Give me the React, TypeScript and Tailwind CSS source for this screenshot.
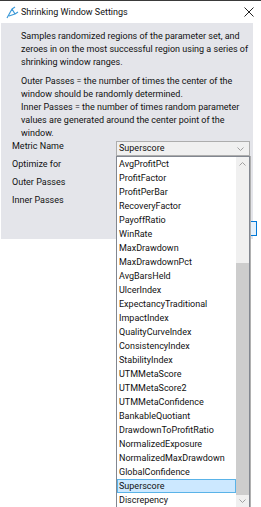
import React from "react";

const items = [
  "AvgProfitPct",
  "ProfitFactor",
  "ProfitPerBar",
  "RecoveryFactor",
  "PayoffRatio",
  "WinRate",
  "MaxDrawdown",
  "MaxDrawdownPct",
  "AvgBarsHeld",
  "UlcerIndex",
  "ExpectancyTraditional",
  "ImpactIndex",
  "QualityCurveIndex",
  "ConsistencyIndex",
  "StabilityIndex",
  "UTMMetaScore",
  "UTMMetaScore2",
  "UTMMetaConfidence",
  "BankableQuotiant",
  "DrawdownToProfitRatio",
  "NormalizedExposure",
  "NormalizedMaxDrawdown",
  "GlobalConfidence",
  "Superscore",
  "Discrepency",
];

const font = { fontFamily: 'Roboto, "Noto Sans", sans-serif' };

function Chevron({ up }: { up?: boolean }) {
  return (
    <svg width="7" height="4" viewBox="0 0 7 4" className="block">
      <path
        d={up ? "M0.5 3.5 L3.5 0.5 L6.5 3.5" : "M0.5 0.5 L3.5 3.5 L6.5 0.5"}
        fill="none"
        stroke="#a0a0a0"
        strokeWidth="1"
      />
    </svg>
  );
}

export default function App() {
  return (
    <div
      className="relative w-[261px] h-[507px] overflow-hidden bg-white text-[9px] text-[#111]"
      style={font}
    >
      <div className="h-px bg-[#3a3a3a]" />
      {/* Title bar */}
      <div className="flex h-[22px] items-center pl-[6px] pr-[7px]">
        <svg width="13" height="13" viewBox="0 0 13 13" className="mr-[2px]">
          <path
            d="M1 12 L6 3 L9 8 L3 10 M6 3 L9 1 M9 8 L12 6"
            fill="none"
            stroke="#3d9ad8"
            strokeWidth="1.2"
            strokeLinejoin="round"
          />
        </svg>
        <span className="text-[9px] leading-none">Shrinking Window Settings</span>
        <span className="ml-auto">
          <svg width="10" height="10" viewBox="0 0 10 10">
            <path d="M0.5 0.5 L9.5 9.5 M9.5 0.5 L0.5 9.5" stroke="#222" strokeWidth="1" />
          </svg>
        </span>
      </div>
      {/* Panel */}
      <div className="ml-px w-[252px] h-[216px] bg-[#e4e5ea] pt-[7px]">
        <div className="pl-[20px] pr-[4px] leading-[13px]">
          <p>
            Samples randomized regions of the parameter set, and zeroes in on the
            most successful region using a series of shrinking window ranges.
          </p>
          <p className="mt-[6px]">
            Outer Passes = the number of times the center of the window should be
            randomly determined.
          </p>
          <p>
            Inner Passes = the number of times random parameter values are
            generated around the center point of the window.
          </p>
        </div>
        <div className="pl-[11px]">
          <div className="flex h-[18px] items-start">
            <span className="w-[104px] leading-[13px]">Metric Name</span>
            <div className="mt-[1px] flex h-[15px] w-[134px] items-center border border-[#adadad] bg-[#f0f0f0] pl-[2px] pr-[5px]">
              <span className="leading-none">Superscore</span>
              <span className="ml-auto">
                <Chevron />
              </span>
            </div>
          </div>
          <div className="flex h-[18px] items-start">
            <span className="leading-[13px]">Optimize for</span>
          </div>
          <div className="flex h-[18px] items-start">
            <span className="leading-[13px]">Outer Passes</span>
          </div>
          <div className="flex h-[18px] items-start">
            <span className="leading-[13px]">Inner Passes</span>
          </div>
        </div>
      </div>
      {/* Partially hidden button */}
      <div className="absolute left-[236px] top-[221px] h-[15px] w-[21px] border border-[#0078d7] bg-[#e5f1fb]" />
      {/* Dropdown list */}
      <div className="absolute left-[116px] top-[156px] flex h-[352px] w-[134px] border border-[#828790] bg-white shadow-[1px_0_0_#b0b0b0]">
        <div className="flex-1">
          {items.map((it) => (
            <div
              key={it}
              className={
                it === "Superscore"
                  ? "flex h-[14px] items-center border border-[#5ab3e8] bg-[#cce8ff] pl-[1px] leading-none"
                  : "flex h-[14px] items-center border border-transparent pl-[1px] leading-none"
              }
            >
              {it}
            </div>
          ))}
        </div>
        <div className="flex w-[13px] flex-col bg-[#f0f0f0]">
          <div className="flex h-[14px] items-center justify-center">
            <Chevron up />
          </div>
          <div className="h-[92px]" />
          <div className="h-[232px] bg-[#cdcdcd]" />
          <div className="flex h-[12px] items-center justify-center">
            <Chevron />
          </div>
        </div>
      </div>
    </div>
  );
}
